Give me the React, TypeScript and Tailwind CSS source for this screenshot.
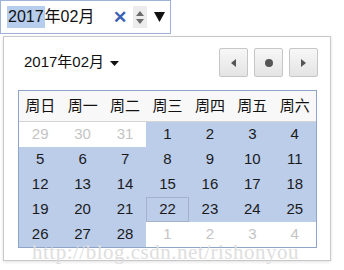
import React from "react";

const font = { fontFamily: '"Liberation Sans", "Noto Sans CJK SC", sans-serif' };

const weekdays = ["周日", "周一", "周二", "周三", "周四", "周五", "周六"];

type Day = { n: number; inMonth: boolean; today?: boolean };

const days: Day[] = [
  ...[29, 30, 31].map((n) => ({ n, inMonth: false })),
  ...Array.from({ length: 28 }, (_, i) => ({ n: i + 1, inMonth: true, today: i + 1 === 22 })),
  ...[1, 2, 3, 4].map((n) => ({ n, inMonth: false })),
];

function NavButton({ children }: { children: React.ReactNode }) {
  return (
    <div className="w-[29px] h-[29px] rounded-[2px] border border-[#c6c6c6] bg-gradient-to-b from-[#f7f7f7] to-[#e4e4e4] flex items-center justify-center">
      {children}
    </div>
  );
}

export default function App() {
  return (
    <div className="relative w-[344px] h-[270px] bg-white overflow-hidden text-[#111]" style={font}>
      {/* input */}
      <div className="w-[171px] h-[34px] border border-[#9fb3d9] flex items-center pl-[6px]">
        <span className="text-[16px] leading-[22px] bg-[#b7cdee] px-[1px]">2017</span>
        <span className="text-[16px] leading-[22px]">年02月</span>
        <span className="ml-[19px] text-[#3b62b4] text-[17px] font-bold leading-none">✕</span>
        <div className="ml-[6px] w-[14px] h-[22px] bg-[#ececec] flex flex-col items-center justify-center gap-[3px]">
          <svg width="8" height="5" viewBox="0 0 8 5"><path d="M0 5 L4 0 L8 5 Z" fill="#6a6a6a" /></svg>
          <svg width="8" height="5" viewBox="0 0 8 5"><path d="M0 0 L4 5 L8 0 Z" fill="#6a6a6a" /></svg>
        </div>
        <svg className="ml-[7px]" width="11" height="10" viewBox="0 0 11 10"><path d="M0 0 L11 0 L5.5 10 Z" fill="#111" /></svg>
      </div>

      {/* popup */}
      <div className="ml-[3px] mt-[2px] w-[328px] h-[225px] border border-[#c8c8c8] shadow-[0_1px_3px_rgba(0,0,0,0.12)] pl-[14px] pr-[12px] pt-[11px]">
        <div className="flex items-center justify-between h-[29px]">
          <div className="flex items-center ml-[6px] text-[15px]">
            <span>2017年02月</span>
            <svg className="ml-[6px] mt-[1px]" width="9" height="5" viewBox="0 0 9 5"><path d="M0 0 L9 0 L4.5 5 Z" fill="#111" /></svg>
          </div>
          <div className="flex gap-[6px]">
            <NavButton>
              <svg width="5" height="8" viewBox="0 0 5 8"><path d="M5 0 L0 4 L5 8 Z" fill="#555" /></svg>
            </NavButton>
            <NavButton>
              <div className="w-[8px] h-[8px] rounded-full bg-[#555]" />
            </NavButton>
            <NavButton>
              <svg width="5" height="8" viewBox="0 0 5 8"><path d="M0 0 L5 4 L0 8 Z" fill="#555" /></svg>
            </NavButton>
          </div>
        </div>

        <div className="mt-[13px] w-[299px] border border-[#8ea5c7]">
          <div className="grid grid-cols-7 h-[31px] bg-[#f8f8f8] border-b border-[#d4d4d4] text-[15px]">
            {weekdays.map((w) => (
              <div key={w} className="flex items-center justify-center">{w}</div>
            ))}
          </div>
          <div className="grid grid-cols-7 text-[15px]">
            {days.map((d, i) => (
              <div
                key={i}
                className={`h-[25px] flex items-center justify-center ${
                  d.inMonth ? "bg-[#bccdea] text-[#1a1a1a]" : "bg-white text-[#c4c4c4]"
                } ${d.today ? "border border-[#a3b2c9] bg-[#b9c8e2]" : ""}`}
              >
                {d.n}
              </div>
            ))}
          </div>
        </div>
      </div>

      {/* watermark */}
      <div
        className="absolute left-[32px] top-[237px] text-[21px] text-[#dedede] tracking-[0.5px] whitespace-nowrap"
        style={{ fontFamily: '"Liberation Serif", serif' }}
      >
        http://blog.csdn.net/rishonyou
      </div>
    </div>
  );
}
